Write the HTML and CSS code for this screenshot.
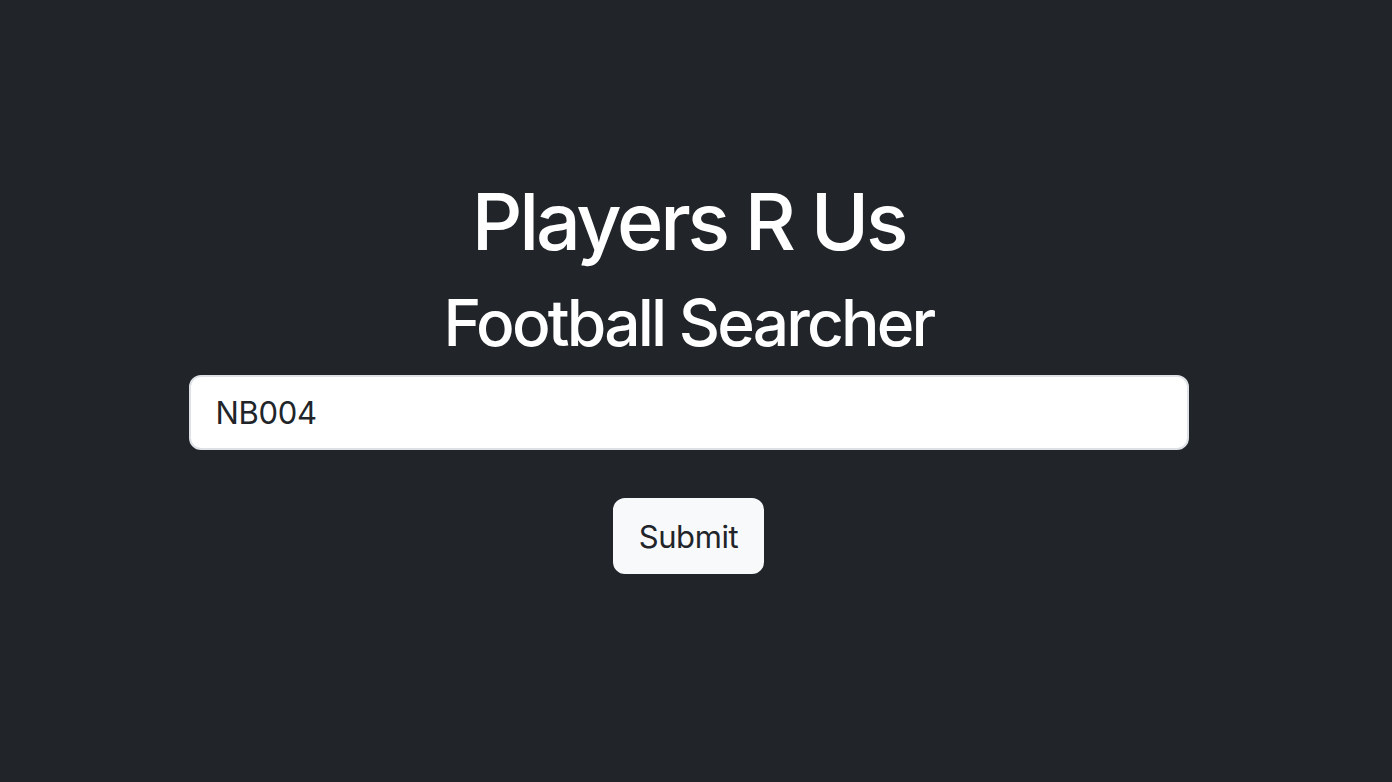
FILE: index.html
```html
<!DOCTYPE html>
<html lang="en">
<head>
<meta charset="utf-8">
<title>Players R Us</title>
<link rel="stylesheet" href="styles.css">
</head>
<body>
<main class="page">
  <h1 class="title">Players R Us</h1>
  <h2 class="subtitle">Football Searcher</h2>
  <form class="search">
    <input class="search-input" type="text" value="NB004">
    <button class="submit-btn" type="button">Submit</button>
  </form>
</main>
</body>
</html>
```
FILE: styles.css
```css
html, body {
  margin: 0;
  padding: 0;
  background: #212529;
  height: 100%;
}
body {
  font-family: Inter, "Noto Sans", "Liberation Sans", sans-serif;
  color: #fff;
  padding-right: 15px;
  box-sizing: border-box;
}
.page {
  display: flex;
  flex-direction: column;
  align-items: center;
  padding-top: 173px;
}
.title {
  margin: 0 0 15px;
  font-size: 79px;
  font-weight: 550;
  line-height: 96px;
  letter-spacing: -3.2px;
}
.subtitle {
  margin: 0 0 14px;
  font-size: 64px;
  font-weight: 550;
  line-height: 77px;
  letter-spacing: -2.8px;
}
.search {
  display: flex;
  flex-direction: column;
  align-items: center;
  gap: 48px;
}
.search-input {
  box-sizing: border-box;
  width: 1000px;
  height: 75px;
  padding: 0 25px;
  font-family: inherit;
  font-size: 31px;
  letter-spacing: -0.3px;
  color: #212529;
  background: #fff;
  border: 2px solid #dee2e6;
  border-radius: 12px;
  outline: none;
}
.submit-btn {
  box-sizing: border-box;
  height: 76px;
  padding: 0 24px;
  font-family: inherit;
  font-size: 31px;
  letter-spacing: -0.4px;
  color: #212529;
  background: #f8f9fa;
  border: 2px solid #f8f9fa;
  border-radius: 12px;
}
```
